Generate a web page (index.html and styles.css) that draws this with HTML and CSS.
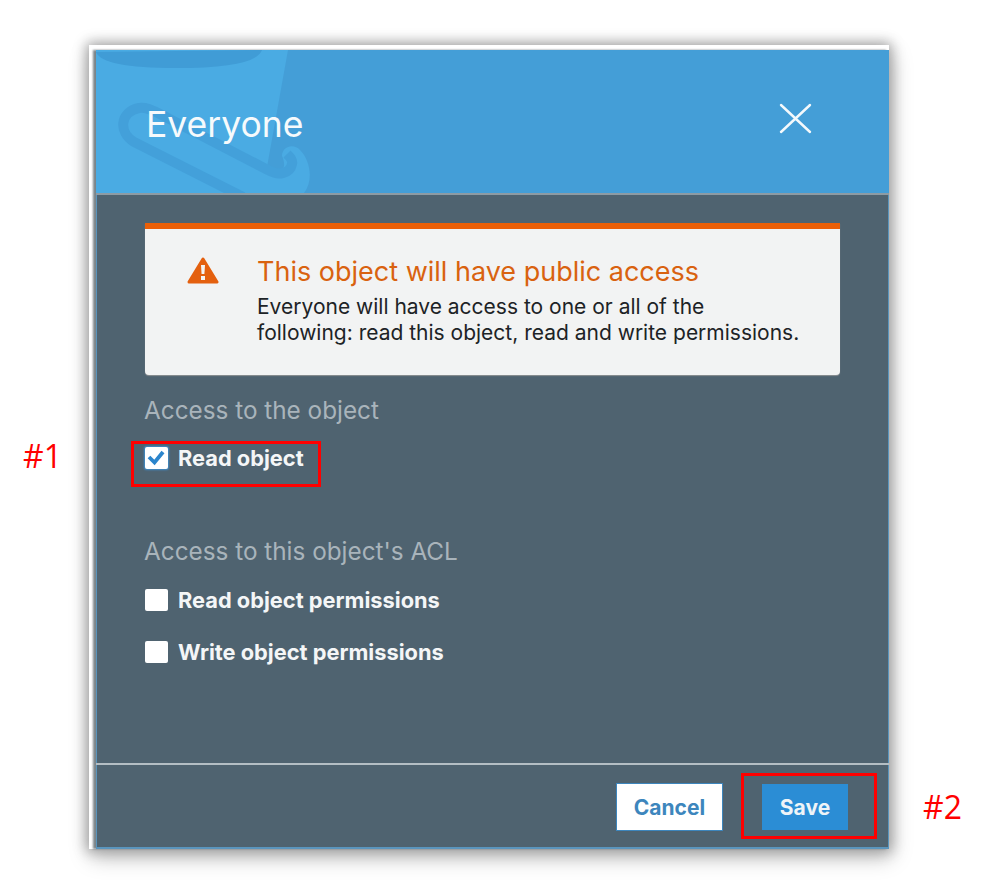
FILE: index.html
```html
<!DOCTYPE html>
<html lang="en">
<head>
<meta charset="UTF-8">
<meta name="viewport" content="width=device-width, initial-scale=1.0">
<title>Everyone</title>
<link rel="stylesheet" href="styles.css">
</head>
<body>

<div class="paper">
    <div class="modal">
        <div class="modal-head">
            <svg class="head-art" width="793" height="143" viewBox="0 0 793 143">
                <path d="M0 0H192L171 117L182 122C188 122 190 114 186 106C186 96 198 93 204 100C214 110 218 130 208 143H0Z" fill="#4aabe3"/>
                <path d="M0 2Q6 18 80 18Q160 18 166 0Z" fill="#409cd6"/>
                <path d="M147 147L38 92C22 82 24 62 43 58C50 57 56 60 62 63L172 120C182 126 194 124 196 114C197 110 194 107 191 104" fill="none" stroke="#43a0da" stroke-width="10"/>
            </svg>
            <h1 class="modal-title">Everyone</h1>
            <svg class="close-icon" width="33" height="31" viewBox="0 0 33 31">
                <path d="M2 2L31 29M31 2L2 29" stroke="#f4f9fc" stroke-width="2.4" stroke-linecap="round"/>
            </svg>
        </div>

        <div class="modal-body">
            <div class="alert">
                <svg class="alert-icon" width="32" height="27" viewBox="0 0 32 27">
                    <path d="M16 2L30 25H2Z" fill="#e4600f" stroke="#e4600f" stroke-width="3" stroke-linejoin="round"/>
                    <path d="M14 8H18L17.4 17H14.6Z" fill="#f2f3f3"/>
                    <rect x="14" y="19" width="4" height="4" fill="#f2f3f3"/>
                </svg>
                <div>
                    <div class="alert-title">This object will have public access</div>
                    <p class="alert-text">Everyone will have access to one or all of the<br>following: read this object, read and write permissions.</p>
                </div>
            </div>

            <div class="section-label">Access to the object</div>
            <div class="check-row">
                <span class="box box-on">
                    <svg width="23" height="22" viewBox="0 0 23 22">
                        <path d="M4 10L9.5 15.5L18 5" fill="none" stroke="#2b85cc" stroke-width="3.8"/>
                    </svg>
                </span>
                Read object
            </div>

            <div class="section-label acl-label">Access to this object's ACL</div>
            <div class="check-row">
                <span class="box"></span>
                Read object permissions
            </div>
            <div class="check-row">
                <span class="box"></span>
                Write object permissions
            </div>
        </div>

        <div class="modal-foot">
            <button class="btn btn-cancel">Cancel</button>
            <button class="btn btn-save">Save</button>
        </div>
    </div>
</div>

<div class="mark mark-box-1"></div>
<div class="mark mark-box-2"></div>
<div class="mark-label mark-label-1">#1</div>
<div class="mark-label mark-label-2">#2</div>

</body>
</html>
```

FILE: styles.css
```css
/* Screenshot pasted on a white page */
body {
    box-sizing: border-box;
    height: 895px;
    margin: 0;
    padding: 45px 0 0 89px;
    background-color: #fff;
    font-family: Inter, "Liberation Sans", sans-serif;
}

.paper {
    width: 793px;
    height: 799px;
    padding: 5px 0 0 7px;
    background-color: #fff;
    box-shadow: 0 0 12px 2px #a0a0a0, 2px 8px 20px rgba(0, 0, 0, 0.28);
}

.modal {
    display: flex;
    flex-direction: column;
    height: 799px;
    background-color: #4f6370;
    box-shadow: -3px 0 2px #7b8489, inset 1px 0 #5a95bd, inset -1px 0 #5a95bd, inset 0 -2px #5a95bd;
}

.modal-head {
    position: relative;
    flex: none;
    display: flex;
    align-items: center;
    justify-content: space-between;
    height: 143px;
    padding: 6px 77px 0 50px;
    box-sizing: border-box;
    background-color: #449ed7;
    overflow: hidden;
}

.head-art {
    position: absolute;
    left: 0;
    top: 0;
}

.modal-title {
    position: relative;
    margin: 0;
    font-size: 35.5px;
    font-weight: normal;
    color: #f6fafc;
}

.close-icon {
    position: relative;
    margin-top: -12px;
}

/* Body */
.modal-body {
    flex: 1;
    padding: 28px 49px 0 49px;
    border-top: 2px solid #8d9ba4;
    border-bottom: 2px solid #b4bec4;
}

.alert {
    display: flex;
    height: 152px;
    box-sizing: border-box;
    padding: 28px 0 0 42px;
    gap: 38px;
    background-color: #f2f3f3;
    border-top: 6px solid #eb5f07;
    border-radius: 0 0 4px 4px;
    box-shadow: 0 1px 1px #8b8f92;
}

.alert-icon {
    flex: none;
}

.alert-title {
    font-size: 27px;
    line-height: 30px;
    color: #d9620f;
}

.alert-text {
    margin: 7px 0 0 0;
    font-size: 21px;
    line-height: 26px;
    white-space: nowrap;
    color: #1d2326;
}

.section-label {
    margin: 22px 0 0 -1px;
    font-size: 24.3px;
    line-height: 26px;
    color: #a9b4bb;
}

.acl-label {
    margin-top: 68px;
}

.check-row {
    display: flex;
    align-items: center;
    gap: 10px;
    height: 24px;
    margin-top: 23px;
    font-size: 21.8px;
    font-weight: bold;
    color: #f4f6f7;
}

.acl-label + .check-row {
    margin-top: 24px;
}

.check-row + .check-row {
    margin-top: 28px;
}

.box {
    flex: none;
    width: 23px;
    height: 22px;
    background-color: #fff;
    border-radius: 2px;
}

.box-on {
    box-shadow: 0 0 2px 1px #3d8fd0;
}

.box svg {
    display: block;
}

/* Footer */
.modal-foot {
    flex: none;
    display: flex;
    justify-content: flex-end;
    align-items: center;
    gap: 40px;
    height: 84px;
    padding: 0 41px 0 0;
}

.btn {
    height: 46px;
    padding: 0;
    border: 0;
    font-family: inherit;
    font-size: 21px;
    font-weight: bold;
}

.btn-cancel {
    width: 105px;
    background-color: #fff;
    color: #3d86bd;
    box-shadow: 0 0 0 1px #3d86bd;
}

.btn-save {
    width: 86px;
    background-color: #2b8dd5;
    color: #eef4f8;
}

/* Red annotations drawn over the screenshot */
.mark {
    position: absolute;
    box-sizing: border-box;
    border: 3px solid #f00;
}

.mark-box-1 {
    left: 131px;
    top: 441px;
    width: 190px;
    height: 46px;
}

.mark-box-2 {
    left: 741px;
    top: 773px;
    width: 136px;
    height: 66px;
}

.mark-label {
    position: absolute;
    font-family: "Open Sans", sans-serif;
    font-size: 32px;
    color: #f00;
}

.mark-label-1 {
    left: 23px;
    top: 434px;
}

.mark-label-2 {
    left: 923px;
    top: 785px;
}
```
